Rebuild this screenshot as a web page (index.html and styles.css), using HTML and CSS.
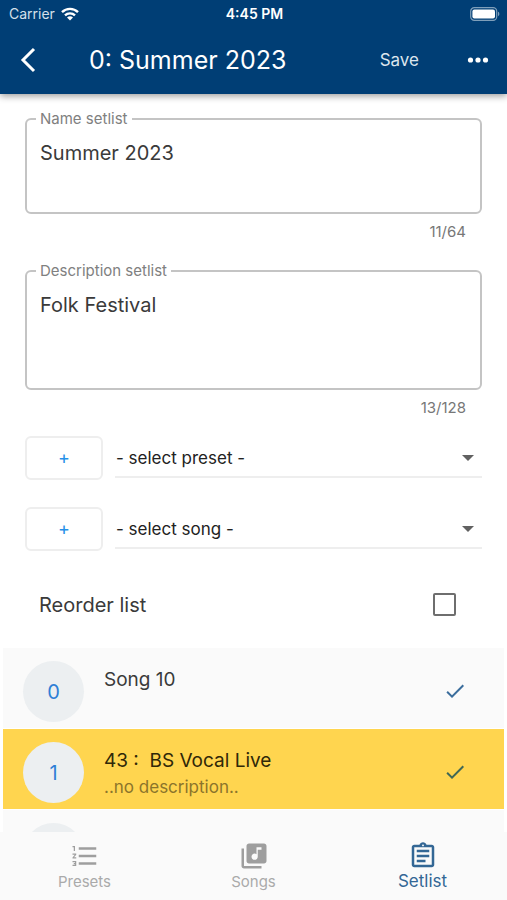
FILE: index.html
```
<!DOCTYPE html>
<html lang="en">
<head>
    <meta charset="UTF-8">
    <meta name="viewport" content="width=device-width, initial-scale=1.0">
    <title>Setlist</title>
    <link rel="stylesheet" href="styles.css">
</head>
<body>
    <header class="app-header">
        <div class="status-bar">
            <div class="carrier">
                <span>Carrier</span>
                <svg width="18" height="14" viewBox="0 0 18 14" fill="none" stroke="#fff" stroke-width="2.4">
                    <path d="M1 5.2a11.4 11.4 0 0 1 16 0"/>
                    <path d="M4 8.4a7.2 7.2 0 0 1 10 0"/>
                    <path d="M9 13.6L6 10.6a4.3 4.3 0 0 1 6 0z" fill="#fff" stroke="none"/>
                </svg>
            </div>
            <span class="time">4:45 PM</span>
            <svg class="battery" width="30" height="14" viewBox="0 0 30 14">
                <rect x="0.7" y="0.7" width="26" height="12.6" rx="3.6" fill="none" stroke="#7f9fba" stroke-width="1.2"/>
                <rect x="2.4" y="2.4" width="22.6" height="9.2" rx="2" fill="#fff"/>
                <path d="M28 4.8c1.8.6 1.8 3.8 0 4.4z" fill="#7f9fba"/>
            </svg>
        </div>
        <div class="title-bar">
            <button type="button" class="back" aria-label="Back">
                <svg width="16" height="26" viewBox="0 0 16 26" fill="none" stroke="#fff" stroke-width="3">
                    <path d="M14 2L3 13l11 11"/>
                </svg>
            </button>
            <h1>0: Summer 2023</h1>
            <button type="button" class="save">Save</button>
            <button type="button" class="more" aria-label="More">
                <svg width="22" height="6" viewBox="0 0 22 6" fill="#fff">
                    <circle cx="3.5" cy="3" r="2.6"/>
                    <circle cx="11" cy="3" r="2.6"/>
                    <circle cx="18.5" cy="3" r="2.6"/>
                </svg>
            </button>
        </div>
    </header>

    <main>
        <form class="setlist-form">
            <fieldset>
                <legend><label for="name">Name setlist</label></legend>
                <textarea id="name" class="name" maxlength="64">Summer 2023</textarea>
            </fieldset>
            <div class="counter">11/64</div>

            <fieldset>
                <legend><label for="description">Description setlist</label></legend>
                <textarea id="description" class="description" maxlength="128">Folk Festival</textarea>
            </fieldset>
            <div class="counter">13/128</div>

            <div class="add-row">
                <button type="button" aria-label="Add preset">+</button>
                <div class="select-wrap">
                    <select aria-label="Preset">
                        <option>- select preset -</option>
                    </select>
                    <svg width="12" height="6" viewBox="0 0 12 6" fill="#616161"><path d="M0 0h12L6 6z"/></svg>
                </div>
            </div>
            <div class="add-row">
                <button type="button" aria-label="Add song">+</button>
                <div class="select-wrap">
                    <select aria-label="Song">
                        <option>- select song -</option>
                    </select>
                    <svg width="12" height="6" viewBox="0 0 12 6" fill="#616161"><path d="M0 0h12L6 6z"/></svg>
                </div>
            </div>

            <div class="reorder">
                <label for="reorder">Reorder list</label>
                <input type="checkbox" id="reorder">
            </div>
        </form>

        <ul class="songs">
            <li>
                <span class="number">0</span>
                <div class="song">
                    <div class="song-title">Song 10</div>
                </div>
                <svg class="check" width="24" height="24" viewBox="0 0 24 24"><path d="M9 16.17L4.83 12l-1.42 1.41L9 19 21 7l-1.41-1.41z"/></svg>
            </li>
            <li class="active">
                <span class="number">1</span>
                <div class="song">
                    <div class="song-title">43 :&nbsp; BS Vocal Live</div>
                    <div class="song-description">..no description..</div>
                </div>
                <svg class="check" width="24" height="24" viewBox="0 0 24 24"><path d="M9 16.17L4.83 12l-1.42 1.41L9 19 21 7l-1.41-1.41z"/></svg>
            </li>
            <li>
                <span class="number"></span>
            </li>
        </ul>
    </main>

    <nav>
        <a href="#presets">
            <svg width="30" height="30" viewBox="0 0 24 24"><path d="M2 17h2v.5H3v1h1v.5H2v1h3v-4H2v1zm1-9h1V4H2v1h1v3zm-1 3h1.8L2 13.1v.9h3v-1H3.2L5 10.900V10H2v1zm5-6v2h14V5H7zm0 14h14v-2H7v2zm0-6h14v-2H7v2z"/></svg>
            <span>Presets</span>
        </a>
        <a href="#songs">
            <svg width="30" height="30" viewBox="0 0 24 24"><path d="M20 2H8c-1.100 0-2 .9-2 2v12c0 1.100.9 2 2 2h12c1.100 0 2-.9 2-2V4c0-1.100-.9-2-2-2zm-2 5h-3v5.500c0 1.380-1.120 2.500-2.500 2.500S10 13.880 10 12.500s1.120-2.500 2.500-2.500c.57 0 1.080.19 1.500.510V5h4v2zM4 6H2v14c0 1.100.9 2 2 2h14v-2H4V6z"/></svg>
            <span>Songs</span>
        </a>
        <a href="#setlist" class="current">
            <svg width="30" height="30" viewBox="0 0 24 24"><path d="M7 15h7v2H7zm0-4h10v2H7zm0-4h10v2H7zm12-4h-4.180C14.400 1.840 13.300 1 12 1c-1.300 0-2.400.84-2.820 2H5c-1.100 0-2 .9-2 2v14c0 1.100.9 2 2 2h14c1.100 0 2-.9 2-2V5c0-1.100-.9-2-2-2zm-7-.250c.410 0 .750.340.750.750s-.340.750-.750.750-.750-.340-.750-.750.340-.750.750-.750zM19 19H5V5h14v14z"/></svg>
            <span>Setlist</span>
        </a>
    </nav>
</body>
</html>
```
FILE: styles.css
```
* {
    box-sizing: border-box;
}
body {
    display: flex;
    flex-direction: column;
    height: 100vh;
    margin: 0;
    background: #fff;
    color: #3a3a3a;
    font-family: Inter, sans-serif;
}
button, select, textarea {
    font-family: inherit;
}
button {
    padding: 0;
    border: none;
    background: none;
    cursor: pointer;
}

/* header */
.app-header {
    position: relative;
    flex: none;
    background: #003e75;
    color: #fff;
    box-shadow: 0 2px 7px rgba(0, 0, 0, 0.4);
}
.status-bar {
    display: grid;
    grid-template-columns: 1fr auto 1fr;
    align-items: center;
    height: 27px;
    padding: 0 7px 0 9px;
    font-size: 14px;
}
.carrier {
    display: flex;
    align-items: center;
    gap: 6px;
    color: #d5e0ea;
}
.time {
    font-weight: 600;
}
.battery {
    justify-self: end;
}
.title-bar {
    display: flex;
    align-items: center;
    height: 67px;
    padding: 0 18px 2px 20px;
}
.title-bar svg {
    display: block;
}
.title-bar h1 {
    flex: 1;
    margin: 0 0 0 53px;
    font-size: 25px;
    font-weight: 400;
}
.save {
    margin-right: 48px;
    color: #dde6ee;
    font-size: 17px;
}

/* form */
main {
    flex: 1;
    min-height: 0;
    overflow: hidden;
}
.setlist-form {
    padding: 17px 25px 0;
}
fieldset {
    min-width: 0;
    margin: 0;
    padding: 0;
    border: 2px solid #c4c4c4;
    border-radius: 6px;
}
legend {
    margin-left: 9px;
    padding: 0 4px;
    color: #808080;
    font-size: 15px;
    line-height: 16px;
}
textarea {
    display: block;
    width: 100%;
    padding: 14px 13px 0;
    border: none;
    outline: none;
    background: none;
    color: #3a3a3a;
    font-size: 20px;
    line-height: 24px;
    resize: none;
}
.name {
    height: 85px;
}
.description {
    height: 109px;
}
.counter {
    padding: 8px 16px 0 0;
    color: #777;
    font-size: 15px;
    line-height: 20px;
    text-align: right;
}
.counter + fieldset {
    margin-top: 21px;
}
.add-row {
    display: flex;
    gap: 12px;
    margin-top: 27px;
}
.counter + .add-row {
    margin-top: 18px;
}
.add-row button {
    width: 78px;
    height: 44px;
    padding-bottom: 2px;
    border: 2px solid #eee;
    border-radius: 6px;
    color: #2490e8;
    font-size: 18px;
}
.select-wrap {
    position: relative;
    flex: 1;
    height: 42px;
    border-bottom: 2px solid #eee;
}
.select-wrap select {
    width: 100%;
    height: 42px;
    padding: 2px 0 0 1px;
    border: none;
    outline: none;
    background: none;
    color: #222;
    font-size: 17px;
    appearance: none;
}
.select-wrap svg {
    position: absolute;
    top: 19px;
    right: 8px;
    pointer-events: none;
}
.reorder {
    display: flex;
    align-items: center;
    justify-content: space-between;
    height: 97px;
    padding: 10px 26px 0 14px;
    font-size: 20px;
}
.reorder input {
    width: 23px;
    height: 23px;
    margin: 0;
    border: 2px solid #6e6e6e;
    border-radius: 2px;
    appearance: none;
}
.reorder input:checked {
    background: #003e75;
}

/* songs */
.songs {
    display: flex;
    flex-direction: column;
    gap: 1px;
    margin: 0;
    padding: 0 3px;
    list-style: none;
}
.songs li {
    display: flex;
    align-items: flex-start;
    height: 80px;
    padding: 13px 37px 7px 20px;
    background: #fafafa;
}
.songs .active {
    background: #ffd54f;
    color: #302808;
}
.number {
    display: flex;
    flex: none;
    align-items: center;
    justify-content: center;
    width: 61px;
    height: 61px;
    border-radius: 50%;
    background: #eceff1;
    color: #2f7fd6;
    font-size: 20px;
}
.song {
    flex: 1;
    padding: 6px 0 0 20px;
    line-height: 26px;
}
.song-title {
    font-size: 19px;
}
.song-description {
    color: #8b742b;
    font-size: 17px;
}
.check {
    align-self: center;
    fill: #3b6d9c;
}
.active .check {
    fill: #406856;
}

/* bottom navigation */
nav {
    display: flex;
    flex: none;
    height: 68px;
    background: #fafafa;
}
nav a {
    display: flex;
    flex: 1;
    flex-direction: column;
    align-items: center;
    padding-top: 9px;
    color: #aaa;
    font-size: 15px;
    line-height: 21px;
    text-decoration: none;
}
nav svg {
    fill: #9e9e9e;
}
nav .current {
    color: #336795;
    font-size: 17px;
}
nav .current svg {
    fill: #336795;
}
```
